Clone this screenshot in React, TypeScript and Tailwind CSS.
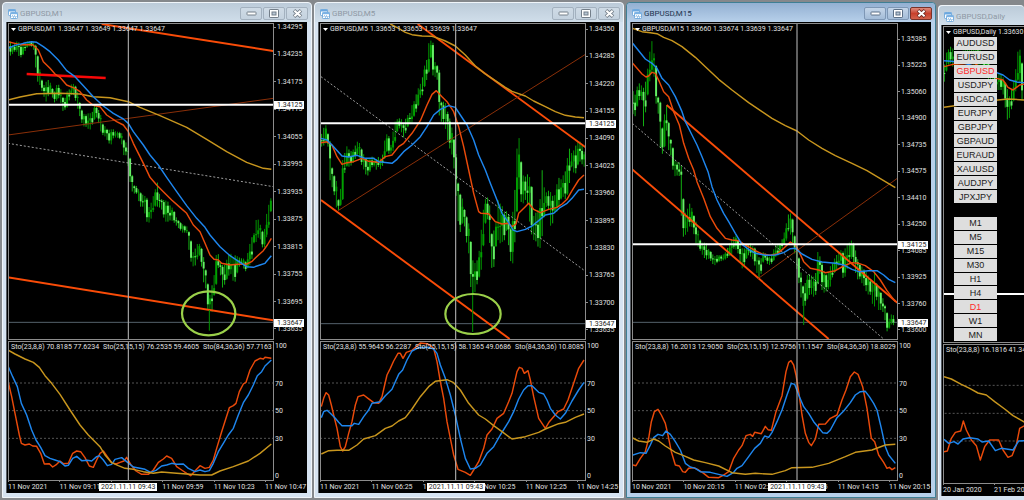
import React from "react";

type Envelope = [number, number, number][];

interface Shape {
  kind: "channel" | "thin" | "dotted" | "marker";
  from: [number, number];
  to: [number, number];
}

interface ChartWindow {
  title: string;
  active?: boolean;
  quote: string;
  priceBox: string;
  oscBox: string;
  cross?: number;
  crossTime?: string;
  crossPct?: number;
  level: number;
  levelPct?: number;
  bid?: number;
  bidPct?: number;
  levels: number[];
  prices: string[];
  priceAxis: string;
  times: string[];
  candles: Envelope;
  spike?: [number, number, number];
  shapes: Shape[];
  ellipse?: [number, number, number, number];
  slow: string;
  mid: string;
  fast: string;
  osc: string[];
  oscSlow: string;
  oscMid: string;
  oscFast: string;
}

const GOLD = "#c8961e";
const BLUE = "#1e86ee";
const ORANGE = "#ea4a0a";

const m1: ChartWindow = {
  title: "GBPUSD,M1",
  quote: "1.33647 1.33649 1.33647 1.33647",
  priceBox: "27 72 792 945",
  oscBox: "27 21 792 414",
  cross: 385,
  crossTime: "2021.11.11 09:43",
  crossPct: 40.2,
  level: 314,
  levelPct: 25.9,
  bid: 967,
  bidPct: 94.5,
  levels: [144, 227, 310],
  prices: ["1.34295", "1.34235", "1.34175", "1.34115", "1.34055", "1.33995", "1.33935", "1.33875", "1.33815", "1.33755", "1.33695", "1.33635"],
  priceAxis: "pb-[7px]",
  times: ["11 Nov 2021", "11 Nov 09:11", "11 Nov 09:35", "11 Nov 09:59", "11 Nov 10:23", "11 Nov 10:47"],
  candles: [
    [24, 120, 155], [32, 125, 168], [40, 140, 160], [48, 124, 150], [54, 125, 165], [60, 130, 172], [66, 140, 172], [74, 126, 155], [84, 122, 140], [92, 124, 138],
    [100, 126, 145], [106, 130, 190], [110, 150, 245], [116, 180, 245], [122, 228, 262], [128, 245, 280], [134, 260, 295], [140, 240, 308], [148, 240, 275], [156, 262, 290],
    [164, 275, 308], [172, 248, 300], [180, 260, 290], [186, 278, 335], [192, 305, 330], [200, 275, 328], [208, 268, 300], [216, 248, 280], [224, 255, 290], [230, 260, 318],
    [236, 290, 335], [242, 320, 360], [250, 340, 380], [256, 345, 378], [262, 340, 385], [270, 340, 390], [278, 335, 372], [284, 310, 358], [292, 325, 350], [300, 335, 390],
    [308, 370, 405], [316, 380, 410], [324, 390, 425], [332, 388, 438], [340, 388, 415], [348, 395, 412], [358, 395, 415], [366, 400, 435], [372, 420, 468], [380, 430, 465],
    [388, 455, 530], [394, 500, 570], [400, 555, 580], [410, 558, 582], [420, 575, 620], [430, 586, 620], [440, 590, 665], [448, 625, 668], [456, 600, 650], [464, 575, 620],
    [472, 546, 620], [478, 580, 622], [486, 600, 630], [494, 600, 665], [504, 605, 665], [512, 620, 660], [520, 625, 665], [530, 655, 678], [540, 665, 690], [550, 675, 700],
    [560, 678, 695], [566, 690, 745], [574, 725, 790], [580, 760, 800], [588, 740, 795], [594, 728, 770], [602, 735, 765], [608, 755, 845], [616, 800, 850], [622, 840, 925],
    [628, 880, 935], [632, 890, 935], [638, 840, 935], [644, 820, 870], [650, 750, 850], [656, 765, 795], [662, 790, 830], [668, 795, 865], [676, 795, 850], [684, 765, 830],
    [692, 760, 820], [700, 775, 845], [706, 765, 845], [714, 770, 810], [722, 775, 790], [730, 775, 805], [738, 785, 815], [746, 745, 800], [754, 715, 790], [762, 700, 730],
    [770, 650, 725], [778, 665, 705], [786, 690, 740], [792, 700, 750], [798, 650, 720], [806, 615, 685], [814, 590, 625],
  ],
  spike: [628, 930, 992],
  shapes: [
    { kind: "channel", from: [305, 72], to: [820, 153] },
    { kind: "channel", from: [24, 832], to: [820, 961] },
    { kind: "thin", from: [24, 405], to: [820, 295] },
    { kind: "dotted", from: [24, 430], to: [820, 560] },
    { kind: "marker", from: [80, 222], to: [317, 234] },
  ],
  ellipse: [626, 940, 80, 66],
  slow: "24,300 60,291 110,281 180,280 240,282 280,290 330,293 385,305 420,322 480,347 560,382 620,418 680,455 740,487 790,505 814,508",
  mid: "24,145 45,136 70,130 95,125 110,127 130,140 150,155 175,180 200,212 225,230 250,257 280,290 310,318 340,340 370,357 385,370 400,395 430,435 450,465 475,495 500,532 530,575 560,617 590,655 615,682 630,705 660,740 690,767 720,787 740,800 760,802 780,795 795,790 805,778 814,767",
  fast: "24,125 45,130 60,134 98,134 115,150 130,185 150,205 165,222 180,232 200,255 225,265 240,275 260,300 280,316 300,320 320,345 350,365 370,375 385,395 400,430 420,470 435,500 450,532 470,555 490,575 515,600 540,622 560,640 580,675 600,695 615,730 630,765 642,778 655,780 665,790 690,795 715,793 740,792 755,785 770,770 790,752 802,735 814,715",
  osc: ["Sto(23,8,8) 70.8185 77.6234", "Sto(25,15,15) 76.2535 59.4605", "Sto(84,36,36) 57.7163"],
  oscSlow: "24,45 45,57 75,72 100,82 118,97 135,122 155,145 180,178 210,225 240,270 265,300 300,335 315,360 335,383 355,392 375,400 400,403 430,410 460,415 485,411 530,415 570,418 600,420 635,420 660,408 700,395 745,378 780,355 814,327",
  oscMid: "24,93 38,125 52,155 64,205 80,240 95,285 108,315 122,337 135,362 150,370 165,375 180,380 195,393 205,391 218,370 230,364 245,377 262,376 275,378 290,365 298,362 310,375 322,392 335,388 345,373 365,368 380,380 400,396 420,400 435,403 452,412 468,406 485,393 500,390 515,385 530,388 550,387 565,400 585,410 600,405 615,410 628,407 640,385 655,350 670,325 685,300 700,280 715,240 730,203 745,180 760,150 772,122 785,110 795,93 814,75",
  oscFast: "24,138 35,185 48,250 58,300 64,325 75,330 88,327 98,333 110,334 122,355 133,387 148,386 158,396 170,388 180,378 190,386 205,385 218,355 230,348 242,350 255,368 268,393 280,397 290,375 300,355 310,348 322,365 335,383 348,387 360,382 372,378 380,367 392,388 408,408 425,418 445,418 460,405 475,382 490,372 500,363 515,370 530,395 545,405 560,415 572,422 585,408 600,392 615,400 628,397 640,375 650,340 665,290 688,218 700,212 708,205 718,170 730,147 738,142 750,105 765,78 780,70 790,72 795,67 814,70",
};

const m5: ChartWindow = {
  title: "GBPUSD,M5",
  quote: "1.33653 1.33653 1.33639 1.33647",
  priceBox: "27 72 792 945",
  oscBox: "27 21 792 414",
  cross: 431,
  crossTime: "2021.11.11 09:43",
  crossPct: 45.5,
  level: 370,
  levelPct: 31.8,
  bid: 971,
  bidPct: 94.9,
  levels: [144, 227, 310],
  prices: ["1.34350", "1.34285", "1.34220", "1.34155", "1.34090", "1.34025", "1.33960", "1.33895", "1.33830", "1.33765", "1.33700", "1.33635"],
  priceAxis: "pt-[2px] pb-[6px]",
  times: ["11 Nov 2021", "11 Nov 06:25", "11 Nov 08:25", "11 Nov 10:25", "11 Nov 12:25", "11 Nov 14:25"],
  candles: [
    [28, 405, 440], [34, 385, 438], [42, 375, 430], [48, 400, 440], [54, 420, 540], [60, 500, 560], [66, 525, 580], [72, 530, 620], [78, 600, 632], [84, 590, 622],
    [92, 480, 600], [98, 460, 520], [104, 438, 500], [112, 450, 500], [120, 455, 495], [128, 440, 480], [136, 425, 465], [144, 430, 475], [150, 450, 500], [156, 465, 510],
    [162, 475, 525], [170, 480, 527], [176, 470, 510], [184, 470, 495], [192, 478, 510], [200, 470, 500], [208, 478, 510], [214, 455, 490], [220, 405, 470], [226, 402, 450],
    [232, 410, 465], [238, 440, 460], [246, 370, 450], [254, 358, 400], [262, 355, 385], [270, 358, 400], [276, 375, 415], [284, 345, 390], [292, 345, 370], [300, 315, 368],
    [308, 300, 345], [316, 270, 330], [324, 255, 295], [332, 230, 285], [338, 195, 260], [344, 180, 240], [350, 130, 220], [358, 120, 165], [364, 130, 240], [370, 195, 230],
    [376, 195, 240], [382, 210, 350], [388, 305, 365], [396, 305, 375], [402, 310, 390], [410, 350, 440], [416, 360, 450], [424, 410, 480], [430, 430, 560], [438, 545, 660],
    [444, 580, 700], [450, 590, 670], [458, 630, 680], [464, 650, 730], [470, 670, 760], [476, 720, 860], [482, 780, 880], [488, 790, 880], [496, 780, 850], [504, 740, 825],
    [510, 660, 800], [518, 600, 680], [526, 590, 650], [534, 620, 740], [540, 710, 812], [546, 690, 800], [552, 665, 740], [558, 600, 720], [564, 610, 730], [572, 620, 725],
    [578, 640, 720], [586, 630, 680], [592, 650, 770], [598, 700, 790], [604, 610, 790], [612, 540, 680], [616, 410, 620], [622, 415, 560], [628, 490, 610], [636, 540, 610],
    [644, 520, 590], [652, 530, 660], [658, 540, 700], [664, 650, 720], [670, 640, 720], [678, 630, 740], [684, 600, 745], [692, 490, 700], [698, 580, 640], [706, 575, 610],
    [712, 570, 640], [718, 580, 700], [726, 595, 640], [732, 570, 640], [738, 530, 630], [746, 540, 600], [754, 525, 590], [762, 510, 600], [770, 440, 570], [778, 460, 500],
    [786, 450, 520], [794, 430, 520], [800, 420, 480], [808, 430, 490], [816, 455, 500],
  ],
  spike: [482, 870, 996],
  shapes: [
    { kind: "channel", from: [317, 72], to: [822, 443] },
    { kind: "channel", from: [27, 600], to: [593, 1017] },
    { kind: "thin", from: [78, 632], to: [822, 162] },
    { kind: "dotted", from: [27, 230], to: [822, 815] },
  ],
  ellipse: [483, 942, 83, 60],
  slow: "235,72 260,85 280,97 300,104 330,108 360,109 380,115 400,123 430,138 460,165 490,198 520,222 550,242 580,262 600,274 640,288 665,303 700,320 730,335 760,346 790,351 816,353",
  mid: "27,415 45,420 60,435 90,468 110,471 135,466 160,475 185,475 200,485 240,490 255,478 275,455 300,435 325,410 345,380 365,345 385,328 410,317 430,322 445,345 465,375 485,420 500,465 520,510 535,550 555,600 570,640 590,668 603,690 615,695 640,688 660,678 680,662 700,645 725,640 745,622 765,610 780,595 800,570 816,568",
  fast: "27,428 45,425 60,435 75,470 90,493 105,488 125,485 150,475 170,484 200,487 220,470 240,465 260,440 275,430 300,400 325,362 345,315 360,283 373,272 390,290 405,305 425,335 440,380 455,440 470,510 485,580 500,635 507,640 530,641 550,665 570,672 590,670 600,680 612,672 620,640 640,620 650,610 665,628 685,638 710,628 735,622 750,612 765,598 780,572 800,540 816,525",
  osc: ["Sto(23,8,8) 55.9645 56.2287", "Sto(25,15,15) 58.1365 49.0686", "Sto(84,36,36) 10.8085"],
  oscSlow: "28,357 50,347 75,346 110,346 135,330 155,312 190,302 220,280 240,273 260,258 280,248 300,222 325,185 350,155 370,139 405,134 425,143 445,165 470,205 500,240 520,252 545,272 570,290 600,312 640,305 680,292 700,282 740,266 760,262 790,247 816,237",
  oscMid: "28,248 35,230 45,226 55,235 70,250 80,262 90,272 120,272 127,265 140,268 155,245 170,225 180,205 205,200 220,182 240,163 250,140 260,118 272,105 285,75 300,48 320,38 350,37 365,42 375,55 385,90 400,130 415,180 430,240 445,310 460,370 475,402 490,400 505,390 525,355 545,335 565,300 590,260 605,230 620,192 635,165 648,152 660,152 680,172 695,177 705,195 715,220 730,240 745,252 760,235 780,198 800,165 816,142",
  oscFast: "28,215 35,190 42,173 50,180 58,210 65,240 75,280 85,335 92,348 100,335 110,295 120,260 130,210 138,185 155,180 168,190 185,203 200,205 210,185 218,150 225,120 235,100 245,78 258,55 265,55 273,70 283,52 300,46 315,33 325,24 345,26 355,32 365,40 375,80 385,140 395,190 405,260 415,310 425,360 438,403 460,412 475,421 485,405 500,380 515,340 525,300 540,282 555,250 575,235 590,200 600,175 615,110 622,97 630,100 637,115 648,107 655,135 665,185 680,250 700,280 712,260 725,245 738,230 755,222 768,195 785,145 800,100 816,75",
};

const m15: ChartWindow = {
  title: "GBPUSD,M15",
  active: true,
  quote: "1.33660 1.33674 1.33639 1.33647",
  priceBox: "33 72 792 945",
  oscBox: "33 21 792 414",
  cross: 525,
  crossTime: "2021.11.11 09:43",
  crossPct: 55.3,
  level: 733,
  levelPct: 70,
  bid: 967,
  bidPct: 94.5,
  levels: [144, 227, 310],
  prices: ["1.35385", "1.35225", "1.35060", "1.34900", "1.34735", "1.34575", "1.34410", "1.34250", "1.34085", "1.33925", "1.33760", "1.33600"],
  priceAxis: "pt-[12px] pb-[6px]",
  times: ["10 Nov 2021", "10 Nov 20:15", "11 Nov 02:15", "11 Nov 08:15", "11 Nov 14:15", "11 Nov 20:15"],
  candles: [
    [32, 270, 340], [38, 290, 355], [44, 262, 325], [52, 250, 300], [60, 258, 300], [66, 265, 405], [72, 240, 320], [78, 200, 280], [84, 150, 240], [90, 122, 215],
    [96, 160, 230], [102, 190, 310], [108, 290, 330], [114, 290, 440], [120, 390, 465], [128, 340, 440], [134, 315, 390], [140, 365, 450], [148, 430, 470], [154, 445, 520],
    [160, 490, 530], [168, 485, 525], [174, 488, 530], [180, 500, 710], [186, 635, 710], [194, 640, 700], [200, 610, 690], [206, 612, 670], [214, 640, 695], [222, 665, 730],
    [228, 690, 740], [236, 725, 755], [244, 730, 770], [252, 725, 780], [258, 745, 775], [268, 755, 785], [276, 770, 798], [284, 765, 790], [292, 765, 785], [302, 765, 782],
    [312, 755, 778], [320, 735, 770], [328, 720, 765], [336, 710, 745], [344, 705, 750], [350, 725, 765], [358, 740, 805], [364, 750, 805], [370, 740, 785], [378, 735, 765],
    [386, 730, 770], [394, 740, 780], [402, 745, 810], [410, 770, 836], [416, 780, 830], [422, 755, 790], [430, 760, 780], [438, 770, 795], [446, 770, 795], [454, 750, 785],
    [462, 735, 770], [470, 735, 765], [478, 725, 750], [486, 700, 735], [494, 665, 720], [500, 640, 690], [508, 640, 710], [514, 665, 740], [520, 725, 770], [526, 740, 820],
    [534, 795, 870], [540, 840, 915], [546, 870, 920], [552, 835, 915], [558, 820, 890], [566, 825, 880], [574, 830, 890], [580, 830, 890], [588, 750, 850], [594, 770, 820],
    [600, 785, 870], [608, 820, 880], [616, 825, 870], [624, 800, 865], [632, 790, 830], [640, 770, 815], [648, 760, 800], [656, 750, 790], [664, 755, 840], [672, 740, 825],
    [680, 730, 785], [690, 720, 775], [698, 735, 800], [704, 770, 840], [712, 790, 835], [720, 800, 850], [728, 810, 860], [736, 820, 885], [744, 840, 880], [750, 850, 910],
    [758, 815, 920], [764, 850, 900], [770, 860, 930], [778, 880, 930], [786, 905, 940], [794, 930, 995], [800, 960, 990], [806, 945, 975], [812, 940, 970], [818, 955, 985],
  ],
  spike: [545, 900, 975],
  shapes: [
    { kind: "channel", from: [134, 315], to: [826, 908] },
    { kind: "channel", from: [31, 508], to: [620, 1017] },
    { kind: "thin", from: [408, 836], to: [826, 535] },
    { kind: "dotted", from: [31, 370], to: [785, 1017] },
  ],
  slow: "32,85 60,95 85,98 105,101 125,112 150,122 180,140 220,172 250,200 290,238 330,270 380,308 420,335 450,355 490,377 525,393 560,420 600,445 640,467 690,490 735,512 790,545 820,563",
  mid: "32,130 50,152 70,177 90,190 105,205 120,235 140,255 160,290 180,335 190,365 210,405 225,435 240,470 258,515 270,560 285,600 305,640 320,665 340,700 360,733 380,748 400,760 430,766 460,765 485,758 505,746 520,745 540,762 570,778 600,786 640,790 665,795 690,808 710,815 740,812 765,812 785,825 800,838 820,848",
  fast: "32,190 45,205 60,222 72,231 80,228 90,217 100,220 112,245 125,275 140,290 155,335 172,375 185,430 200,475 215,510 225,545 245,595 265,650 285,685 310,715 330,720 350,722 370,735 400,752 420,762 445,766 465,762 485,745 505,726 520,735 530,752 545,785 565,805 590,810 610,818 640,812 665,798 690,788 710,790 730,797 755,815 775,840 795,872 820,905",
  osc: ["Sto(23,8,8) 16.2013 12.9050", "Sto(25,15,15) 12.5756 11.1547", "Sto(84,36,36) 18.8029"],
  oscSlow: "32,309 50,318 75,322 95,312 110,318 130,333 160,352 185,362 215,375 250,383 290,393 330,413 370,418 400,415 450,418 490,407 510,398 570,397 620,385 670,365 700,352 750,345 790,330 820,328",
  oscMid: "32,360 55,353 72,355 85,330 95,308 108,298 122,302 132,288 145,298 160,320 175,345 190,385 205,396 220,400 235,410 265,412 290,418 315,424 335,412 345,400 360,392 380,365 398,340 415,325 428,303 440,307 450,292 465,260 480,225 495,180 508,145 518,148 530,180 545,215 560,235 575,260 590,278 602,293 615,295 625,285 645,248 665,228 685,203 700,180 715,170 730,169 742,185 755,205 765,225 778,280 790,335 800,360 820,385",
  oscFast: "32,390 42,392 55,370 70,350 80,310 88,260 97,230 108,223 118,240 130,265 138,300 148,350 160,390 172,393 182,410 190,412 200,400 215,398 230,405 245,415 260,427 290,428 305,420 320,410 335,370 350,345 360,332 372,302 385,298 392,304 398,292 418,296 430,274 438,284 448,286 462,230 480,182 492,110 500,82 507,77 515,90 522,120 530,170 540,240 550,295 560,322 568,332 580,312 590,268 610,267 625,250 645,240 660,195 672,165 685,125 697,111 708,118 722,155 735,220 748,310 758,320 770,360 785,382 795,400 802,397 810,404 820,398",
};

const daily: ChartWindow = {
  title: "GBPUSD,Daily",
  quote: "1.33630",
  priceBox: "58 81 240 945",
  oscBox: "58 420 240 414",
  level: 882,
  levels: [541, 625, 708],
  prices: [],
  priceAxis: "",
  times: ["20 Jan 2020", "21 Feb 2020"],
  candles: [
    [58, 200, 250], [64, 160, 220], [70, 150, 195], [78, 140, 190], [84, 145, 200], [90, 160, 200], [120, 150, 180], [160, 140, 200], [200, 200, 250], [216, 230, 270],
    [222, 220, 270], [230, 225, 270], [238, 235, 290], [246, 260, 360], [254, 290, 355], [260, 270, 330], [268, 240, 300], [276, 190, 260], [282, 130, 230], [288, 160, 260], [294, 200, 320],
  ],
  shapes: [],
  slow: "58,322 90,317 160,305 220,300 250,297 300,300",
  mid: "58,182 80,184 120,190 216,218 235,225 255,240 280,247 300,248",
  fast: "58,200 85,193 150,190 216,235 235,240 250,262 265,270 285,255 300,252",
  osc: ["Sto(23,8,8) 16.1816 41.3406"],
  oscSlow: "58,515 80,522 110,538 135,550 160,564 185,570 210,590 240,612 265,632 285,643 300,652",
  oscMid: "58,703 72,715 88,710 100,717 115,702 135,698 160,702 172,711 192,708 212,737 230,730 265,735 282,708 300,707",
  oscFast: "58,740 68,738 80,700 92,682 108,678 116,648 125,675 140,705 155,722 167,765 180,725 195,705 222,705 235,735 250,757 262,752 275,720 285,670 300,662",
};

const PAIRS = ["AUDUSD", "EURUSD", "GBPUSD", "USDJPY", "USDCAD", "EURJPY", "GBPJPY", "GBPAUD", "EURAUD", "XAUUSD", "AUDJPY", "JPXJPY"];
const FRAMES = ["M1", "M5", "M15", "M30", "H1", "H4", "D1", "W1", "MN"];

function envelopeAt(points: Envelope, x: number): [number, number] {
  for (let i = 1; i < points.length; i++) {
    const [x0, h0, l0] = points[i - 1];
    const [x1, h1, l1] = points[i];
    if (x <= x1) {
      const t = Math.max(0, (x - x0) / (x1 - x0));
      return [h0 + (h1 - h0) * t, l0 + (l1 - l0) * t];
    }
  }
  const last = points[points.length - 1];
  return [last[1], last[2]];
}

function Candles({ points }: { points: Envelope }) {
  const bars: React.ReactNode[] = [];
  const end = points[points.length - 1][0];
  let prev: number | null = null;
  let i = 0;
  for (let x = points[0][0] + 1; x <= end + 1; x += 6.3) {
    const [hi, lo] = envelopeAt(points, x);
    const wave = Math.sin(i * 2.4) * 0.32;
    const close = (hi + lo) / 2 + (lo - hi) * wave;
    const open = Math.min(lo - 3, Math.max(hi + 3, prev ?? close));
    const top = Math.min(open, close);
    const height = Math.max(3, Math.abs(open - close));
    const up = close < open;
    bars.push(
      <g key={i}>
        <rect x={x - 1.5} y={hi} width={3} height={lo - hi} fill={up ? "#009200" : "#12b012"} />
        <rect x={x - 2.9} y={top} width={5.8} height={height} fill={up ? "#00a000" : "#66ee66"} />
      </g>
    );
    prev = close;
    i += 1;
  }
  return <>{bars}</>;
}

function Curve({ points, color }: { points: string; color: string }) {
  return <polyline points={points} fill="none" stroke={color} strokeWidth={1.45} strokeLinejoin="round" vectorEffect="non-scaling-stroke" />;
}

const SHAPE_STYLE = {
  channel: { stroke: "#fa4c08", strokeWidth: 1.9 },
  thin: { stroke: "#8a2f08", strokeWidth: 1 },
  dotted: { stroke: "#b0b0b0", strokeWidth: 0.9, strokeDasharray: "2 2" },
  marker: { stroke: "#f80808", strokeWidth: 2.4 },
};

function PricePlot({ chart }: { chart: ChartWindow }) {
  return (
    <svg className="block h-full w-full" viewBox={chart.priceBox} preserveAspectRatio="none" aria-hidden="true">
      {chart.bid && <line x1={0} x2={840} y1={chart.bid} y2={chart.bid} stroke="#55626c" strokeWidth={1} vectorEffect="non-scaling-stroke" />}
      <Candles points={chart.candles} />
      {chart.shapes.map((s, i) => (
        <line key={i} x1={s.from[0]} y1={s.from[1]} x2={s.to[0]} y2={s.to[1]} vectorEffect="non-scaling-stroke" {...SHAPE_STYLE[s.kind]} />
      ))}
      <Curve points={chart.slow} color={GOLD} />
      <Curve points={chart.fast} color={ORANGE} />
      <Curve points={chart.mid} color={BLUE} />
      {chart.cross && <line x1={chart.cross} x2={chart.cross} y1={0} y2={1100} stroke="#b0b0b0" strokeWidth={1.1} vectorEffect="non-scaling-stroke" />}
      <line x1={0} x2={840} y1={chart.level} y2={chart.level} stroke="#fff" strokeWidth={2} vectorEffect="non-scaling-stroke" />
      {chart.spike && <rect x={chart.spike[0] - 1.5} y={chart.spike[1]} width={3} height={chart.spike[2] - chart.spike[1]} fill="#009200" />}
      {chart.ellipse && (
        <ellipse cx={chart.ellipse[0]} cy={chart.ellipse[1]} rx={chart.ellipse[2]} ry={chart.ellipse[3]} fill="none" stroke="#9bd04a" strokeWidth={2.2} vectorEffect="non-scaling-stroke" />
      )}
    </svg>
  );
}

function OscPlot({ chart }: { chart: ChartWindow }) {
  return (
    <svg className="block h-full w-full" viewBox={chart.oscBox} preserveAspectRatio="none" aria-hidden="true">
      {chart.levels.map((y) => (
        <line key={y} x1={0} x2={840} y1={y} y2={y} stroke="#555" strokeWidth={1} strokeDasharray="2 2" vectorEffect="non-scaling-stroke" />
      ))}
      <Curve points={chart.oscFast} color={ORANGE} />
      <Curve points={chart.oscMid} color={BLUE} />
      <Curve points={chart.oscSlow} color={GOLD} />
      {chart.cross && <line x1={chart.cross} x2={chart.cross} y1={0} y2={900} stroke="#b0b0b0" strokeWidth={1.1} vectorEffect="non-scaling-stroke" />}
    </svg>
  );
}

function WindowIcon() {
  return (
    <svg className="h-[10px] w-[10px] shrink-0" viewBox="0 0 20 20" aria-hidden="true">
      <rect x="1" y="1" width="14" height="12" rx="1.5" fill="#fff" stroke="#5f9fd8" strokeWidth="1.6" />
      <rect x="1" y="1" width="14" height="4" fill="#6ba7df" />
      <rect x="5" y="7" width="14" height="12" rx="1.5" fill="#fff" stroke="#5f9fd8" strokeWidth="1.6" />
      <rect x="5" y="7" width="14" height="3.4" fill="#7ab2e5" />
      <path d="M7 15l2-2 2 4 2-4 2 4 2-3" fill="none" stroke="#5f9fd8" strokeWidth="1.4" />
    </svg>
  );
}

function CaptionButtons({ active }: { active?: boolean }) {
  const glyph = active ? "#5b6f86" : "#737e89";
  const base = "flex h-[13px] w-[22px] items-center justify-center rounded-xs border";
  const tone = active
    ? "border-[#7e97b5] bg-linear-to-b from-[#c4d5e8] to-[#a3bcd8]"
    : "border-[#a3b1bf] bg-linear-to-b from-[#cfdbe6] to-[#c4d2df]";
  const closeTone = active ? "border-[#7a3228] bg-linear-to-b from-[#de8a7c] via-[#c8402c] to-[#d2604a]" : tone;
  return (
    <div className="flex gap-px">
      <button type="button" aria-label="Minimize" className={`${base} ${tone}`}>
        <svg className="h-[5px] w-[11px]" viewBox="0 0 11 5">
          <rect x="1" y="1" width="9" height="3" rx="0.6" fill="#fff" stroke={glyph} strokeWidth="1" />
        </svg>
      </button>
      <button type="button" aria-label="Maximize" className={`${base} ${tone}`}>
        <svg className="h-[9px] w-[10px]" viewBox="0 0 10 9">
          <rect x="0.5" y="0.5" width="9" height="8" rx="0.6" fill="#fff" stroke={glyph} strokeWidth="1" />
          <rect x="3" y="3" width="4" height="3" fill="#b8c6d4" stroke={glyph} strokeWidth="1" />
        </svg>
      </button>
      <button type="button" aria-label="Close" className={`${base} ${closeTone}`}>
        <svg className="h-[9px] w-[11px]" viewBox="0 0 11 9">
          <path d="M2 1.3L9 7.7M9 1.3L2 7.7" stroke={active ? "#6b2a22" : glyph} strokeWidth="3.6" />
          <path d="M2.4 1.7L8.6 7.3M8.6 1.7L2.4 7.3" stroke="#fff" strokeWidth="2" />
        </svg>
      </button>
    </div>
  );
}

function ButtonGroup({ items, current, size }: { items: string[]; current: string; size: string }) {
  return (
    <div className={`flex w-[43px] flex-col gap-px ${size}`}>
      {items.map((item) => (
        <button
          key={item}
          type="button"
          className={`flex flex-1 items-center justify-center bg-[#dedede] font-['Liberation_Sans',sans-serif] text-[9px] leading-[12px] ${item === current ? "text-[#ff2a2a]" : "text-[#222]"}`}
        >
          {item}
        </button>
      ))}
    </div>
  );
}

function Tag({ pct, children }: { pct: number; children: React.ReactNode }) {
  return (
    <span className="absolute left-0 w-[30px] -translate-y-1/2 bg-white pl-[3px] leading-[8px] text-[#222]" style={{ top: `${pct}%` }}>
      {children}
    </span>
  );
}

function ChartPanel({ chart }: { chart: ChartWindow }) {
  const cut = chart.prices.length === 0;
  const frame = chart.active ? "border-[#3f7f94] bg-[#b7d0ea]" : "border-[#f0f5fa] bg-[#d6e3f1]";
  const bar = chart.active ? "bg-linear-to-b from-[#93b0d2] to-[#b7d0ea]" : "bg-linear-to-b from-[#bccbd9] to-[#d0deea]";
  return (
    <section className={`flex min-w-0 flex-col rounded-t border ${frame} ${cut ? "mt-[3px] -mb-[3px] overflow-hidden border-r-0" : ""}`}>
      <header className={`flex h-[19px] shrink-0 items-center gap-[2px] rounded-t pt-[2px] pr-[3px] pl-[5px] ${bar}`}>
        <WindowIcon />
        <h2 className={`grow text-[8px] leading-[12px] whitespace-nowrap ${chart.active ? "text-[#1f3550]" : "text-[#8f99a4]"}`}>{chart.title}</h2>
        {!cut && <CaptionButtons active={chart.active} />}
      </header>
      <div className={`mb-[4px] flex min-h-0 flex-1 flex-col border-l border-[#555b62] bg-black pt-px pl-px text-[7px] text-[#e0e0e0] ${cut ? "ml-[2px]" : "mr-[4px] ml-[3px]"}`}>
        <div className="flex min-h-0 flex-[317]">
          <div className={`relative min-w-0 flex-1 overflow-hidden border border-[#8c8c8c] ${cut ? "border-r-0" : ""}`}>
            <PricePlot chart={chart} />
            <p className="absolute top-px left-[2px] flex items-center gap-[2px] leading-[9px] whitespace-nowrap">
              <svg className="h-[3px] w-[5px]" viewBox="0 0 5 3" aria-hidden="true">
                <path d="M0 0h5L2.5 3z" fill="#fff" />
              </svg>
              <span>{chart.title}</span>
              <span>{chart.quote}</span>
            </p>
            {cut && (
              <nav className="absolute top-[10px] left-[10px] flex flex-col gap-[14px]">
                <ButtonGroup items={PAIRS} current="GBPUSD" size="h-[166px]" />
                <ButtonGroup items={FRAMES} current="D1" size="h-[124px]" />
              </nav>
            )}
          </div>
          {!cut && (
            <div className={`relative flex w-[33px] shrink-0 flex-col justify-between ${chart.priceAxis}`}>
              {chart.prices.map((p) => (
                <span key={p} className="flex items-center gap-px leading-[8px]">
                  <i className="h-px w-[2px] bg-[#8c8c8c]" />
                  {p}
                </span>
              ))}
              <Tag pct={chart.levelPct ?? 0}>1.34125</Tag>
              <Tag pct={chart.bidPct ?? 0}>1.33647</Tag>
            </div>
          )}
        </div>
        <div className="mt-px flex min-h-0 flex-[140]">
          <div className={`relative min-w-0 flex-1 overflow-hidden border border-[#8c8c8c] ${cut ? "border-r-0" : ""}`}>
            <OscPlot chart={chart} />
            <p className="absolute top-0 left-[2px] flex gap-[4px] leading-[10px] whitespace-nowrap">
              {chart.osc.map((t) => (
                <span key={t}>{t}</span>
              ))}
            </p>
          </div>
          {!cut && (
            <div className="flex w-[33px] shrink-0 flex-col justify-between pl-px leading-[10px]">
              <span>100</span>
              <div className="flex h-[65px] flex-col justify-between">
                <span>70</span>
                <span>50</span>
                <span>30</span>
              </div>
              <span>0</span>
            </div>
          )}
        </div>
        <div className={`relative grid h-[12px] shrink-0 ${cut ? "grid-cols-[51px_51px] overflow-hidden" : "grid-cols-[repeat(6,17.2%)]"}`}>
          {chart.times.map((t) => (
            <span key={t} className="flex flex-col leading-[10px] whitespace-nowrap">
              <i className="h-px w-px bg-[#8c8c8c]" />
              {t}
            </span>
          ))}
          {chart.crossTime && (
            <time className="absolute top-[2px] w-[58px] -translate-x-1/2 bg-white text-center leading-[8px] whitespace-nowrap text-[#222]" style={{ left: `${chart.crossPct}%` }}>
              {chart.crossTime}
            </time>
          )}
        </div>
      </div>
    </section>
  );
}

export default function App() {
  return (
    <main className="grid h-screen min-h-[400px] grid-cols-[310fr_310fr_310fr_86fr] gap-[2px] overflow-hidden bg-[#85888c] py-[2px] pl-[2px] font-['Roboto',sans-serif]">
      {[m1, m5, m15, daily].map((chart) => (
        <ChartPanel key={chart.title} chart={chart} />
      ))}
    </main>
  );
}
